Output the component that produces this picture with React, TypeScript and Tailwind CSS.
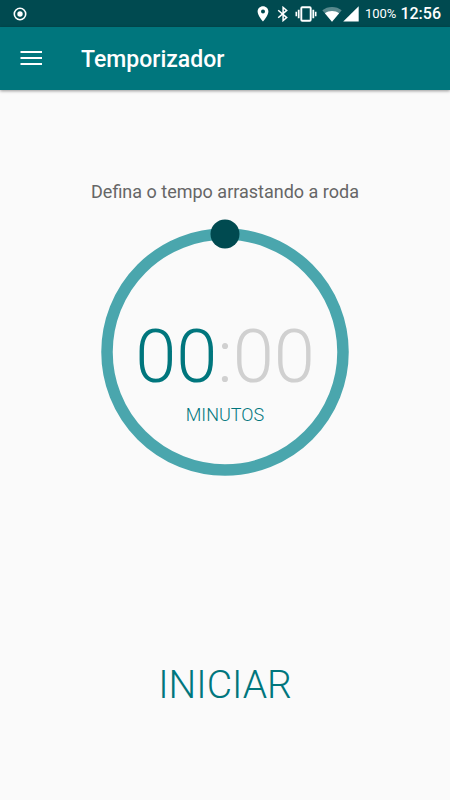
import { useState } from 'react'

const RADIUS = 118
const CENTER = 132

function pad(n: number) {
  return String(n).padStart(2, '0')
}

function StatusBar() {
  return (
    <div className="flex h-[27px] items-center justify-between bg-[#004a50] pr-[9px] pl-[13px] text-white">
      <svg width="14" height="14" viewBox="0 0 14 14" fill="none">
        <circle cx="7" cy="7" r="5.7" stroke="currentColor" strokeWidth="1.6" />
        <circle cx="7" cy="7" r="2.7" fill="currentColor" />
      </svg>

      <div className="flex items-center">
        <svg width="12" height="16" viewBox="0 0 12 16" fill="currentColor">
          <path
            fillRule="evenodd"
            d="M6 0.3C2.9 0.3 0.6 2.6 0.6 5.6c0 4 5.4 10 5.4 10s5.4-6 5.4-10C11.4 2.6 9.1 0.3 6 0.3zm0 7.3a2 2 0 1 1 0-4 2 2 0 0 1 0 4z"
          />
        </svg>
        <svg className="ml-2" width="12" height="16" viewBox="0 0 12 16" fill="none" stroke="currentColor" strokeWidth="1.5">
          <path d="M1.2 4.3 9.7 11.6 6.1 14.6V1.4l3.600 3L1.2 11.7" />
        </svg>
        <svg className="ml-[6px]" width="22" height="16" viewBox="0 0 22 16" fill="none" stroke="currentColor">
          <rect x="6.3" y="1.3" width="9.4" height="13.4" rx="1" strokeWidth="1.9" />
          <path d="M3.700 3.800v8.400M18.300 3.800v8.400" strokeWidth="1.8" />
          <path d="M1.300 5.800v4.400M20.700 5.800v4.400" strokeWidth="1.6" />
        </svg>
        <svg className="ml-[5px]" width="20" height="16" viewBox="0 0 20 16" fill="currentColor">
          <path opacity="0.35" d="M0.3 4.3C3 2 6.3 0.9 10 0.9s7 1.1 9.7 3.4L10 15.8z" />
          <path d="M2.9 7.3C4.9 5.8 7.3 5 10 5s5.1 0.8 7.1 2.3L10 15.8z" />
        </svg>
        <svg className="ml-px" width="16" height="16" viewBox="0 0 16 16" fill="currentColor">
          <path d="M15.7 0.3v15.3H0.2z" />
        </svg>
        <span className="ml-[6px] pt-px text-[13px]">100%</span>
        <span className="ml-1 pt-px text-base font-medium">12:56</span>
      </div>
    </div>
  )
}

function AppBar() {
  return (
    <header className="z-10 flex h-[63px] items-center bg-[#00767d] px-5 text-white shadow-[0_1px_3px_rgba(0,0,0,0.4)]">
      <button type="button" aria-label="Menu" className="mr-[39px]">
        <svg width="22" height="16" viewBox="0 0 22 16" stroke="currentColor" strokeWidth="2">
          <path d="M0.5 1H22M0.5 7H22M0.5 13H22" />
        </svg>
      </button>
      <h1 className="pt-1 text-[23px] font-medium">Temporizador</h1>
    </header>
  )
}

function Wheel({ minutes, onChange }: { minutes: number; onChange: (n: number) => void }) {
  const angle = (minutes / 60) * 2 * Math.PI
  const x = CENTER + RADIUS * Math.sin(angle)
  const y = CENTER - RADIUS * Math.cos(angle)

  return (
    <div className="relative grid h-66 w-66 place-items-center">
      <svg className="col-start-1 row-start-1 overflow-visible" width="264" height="264" viewBox="0 0 264 264">
        <circle cx={CENTER} cy={CENTER} r={RADIUS} fill="none" stroke="#4aa6ad" strokeWidth="11.5" />
        <circle cx={x} cy={y} r="14.5" fill="#004a50" />
      </svg>
      <div className="col-start-1 row-start-1 flex flex-col items-center pt-11 font-light text-[#00767d]">
        <div className="text-[74px] leading-[72px]">
          <span>{pad(minutes)}</span>
          <span className="text-[#d0d0d0]">:00</span>
        </div>
        <div className="mt-[10px] text-lg leading-6">MINUTOS</div>
      </div>
      <input
        id="minutes"
        type="range"
        min={0}
        max={59}
        value={minutes}
        onChange={(e) => onChange(Number(e.target.value))}
        className="absolute inset-0 h-full w-full cursor-pointer opacity-0"
      />
    </div>
  )
}

export default function App() {
  const [minutes, setMinutes] = useState(0)

  return (
    <div className="flex min-h-screen flex-col bg-[#fafafa] font-[Roboto,sans-serif]">
      <StatusBar />
      <AppBar />
      <main className="flex flex-1 flex-col items-center justify-between py-22">
        <div className="flex flex-col items-center gap-4">
          <label htmlFor="minutes" className="pt-[2px] text-lg leading-6 text-[#666666]">
            Defina o tempo arrastando a roda
          </label>
          <Wheel minutes={minutes} onChange={setMinutes} />
        </div>
        <button type="button" className="h-14 px-4 text-[39px] font-light text-[#00767d]">
          INICIAR
        </button>
      </main>
    </div>
  )
}
